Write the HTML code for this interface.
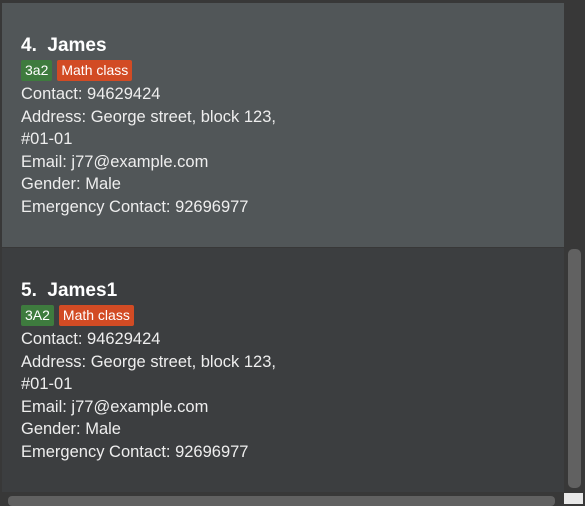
<!DOCTYPE html>
<html><head><style>
html,body{margin:0;padding:0;width:585px;height:504px;overflow:hidden;background:#383838;font-family:"Liberation Sans",sans-serif;color:#fff}
.card{position:absolute;left:2px;width:562px;}
.c1{top:3px;height:244px;background:#515658}
.c2{top:248px;height:244px;background:#3c3e40}
.name{position:absolute;left:19px;font-size:19px;font-weight:bold;white-space:pre}
.tags{position:absolute;left:19px;display:flex;gap:5px}
.tag{font-size:14px;padding:2px 4px;border-radius:2px;line-height:17px}
.g{background:#3e7b3e}.o{background:#d24b24}
.lines{position:absolute;left:19px;font-size:16.5px;line-height:22.6px;color:#eee}
</style></head><body>
<div class="card c1">
<div class="name" style="top:32px">4.  James</div>
<div class="tags" style="top:57px"><span class="tag g">3a2</span><span class="tag o">Math class</span></div>
<div class="lines" style="top:80px">Contact: 94629424<br>Address: George street, block 123,<br>#01-01<br>Email: j77@example.com<br>Gender: Male<br>Emergency Contact: 92696977</div>
</div>
<div class="card c2">
<div class="name" style="top:32px">5.  James1</div>
<div class="tags" style="top:57px"><span class="tag g">3A2</span><span class="tag o">Math class</span></div>
<div class="lines" style="top:80px">Contact: 94629424<br>Address: George street, block 123,<br>#01-01<br>Email: j77@example.com<br>Gender: Male<br>Emergency Contact: 92696977</div>
</div>
<div style="position:absolute;left:568px;top:249px;width:13px;height:239px;background:#616161;border-radius:5px"></div>
<div style="position:absolute;left:8px;top:496px;width:547px;height:10px;background:#616161;border-radius:4px"></div>
<div style="position:absolute;left:564px;top:493px;width:19px;height:11px;background:#e8e8e8"></div>
</body></html>
